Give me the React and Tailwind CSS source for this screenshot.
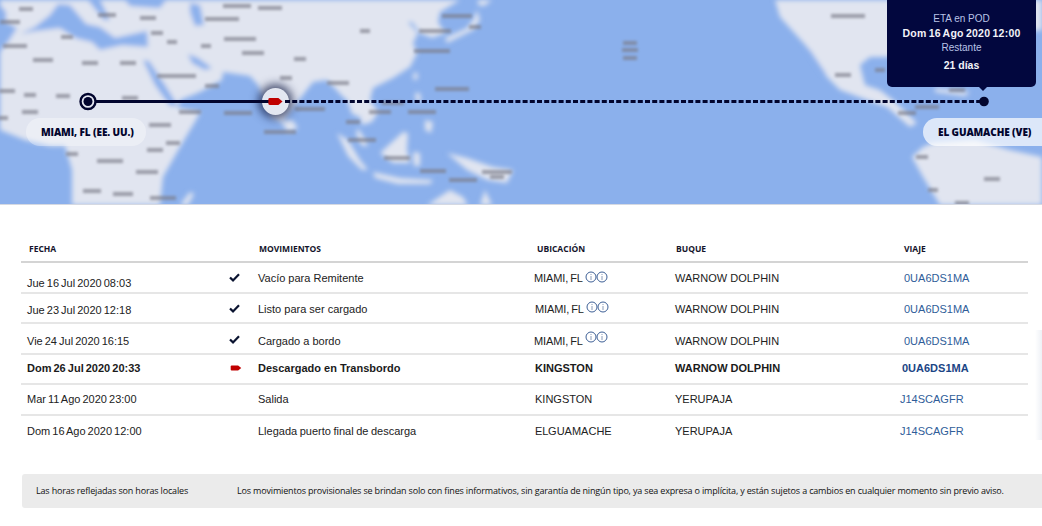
import React from "react";

const land = [
  // Africa + Eurasia
  "M0 0 L460 0 L440 12 L438 22 L445 33 L432 38 L420 33 L412 22 L408 22 L418 33 L413 43 L417 53 L410 67 L393 78 L373 88 L370 100 L378 112 L372 122 L362 125 L360 117 L352 114 L347 100 L343 97 L327 80 L313 82 L295 105 L282 122 L272 118 L258 85 L250 76 L223 72 L222 80 L200 92 L180 100 L178 108 L200 112 L196 120 L180 147 L163 177 L160 205 L72 205 L72 170 L65 146 L50 146 L25 140 L0 130 Z",
  // Madagascar
  "M190 192 L194 194 L188 205 L180 205 Z",
  // Sri Lanka
  "M281 122 L292 120 L298 128 L288 132 Z",
  // Malay / Sumatra
  "M337 133 L348 140 L360 160 L368 170 L362 170 L348 156 Z",
  "M358 128 L364 138 L368 146 L362 146 L356 134 Z",
  // Java
  "M373 172 L400 178 L433 180 L430 184 L398 184 L375 178 Z",
  // Borneo
  "M380 153 L403 132 L408 133 L407 150 L410 163 L393 163 Z",
  // Sulawesi
  "M413 152 L420 153 L420 166 L414 166 Z",
  // Taiwan, Philippines
  "M414 72 L418 74 L417 80 L413 79 Z",
  "M415 93 L420 93 L421 102 L416 101 Z",
  "M425 120 L433 122 L431 133 L425 130 Z",
  // Japan
  "M477 10 L480 20 L473 30 L447 43 L445 38 L467 28 L473 20 Z",
  "M478 0 L492 0 L484 6 L478 5 Z",
  // New Guinea
  "M447 153 L467 158 L493 167 L513 170 L507 183 L487 180 L467 170 Z",
  // Australia
  "M427 205 L450 190 L463 197 L468 205 Z",
  "M480 205 L485 190 L492 205 Z",
  // North + Central America
  "M775 0 L780 17 L807 47 L827 77 L840 90 L867 100 L887 107 L910 127 L917 123 L893 100 L880 90 L865 85 L860 65 L870 57 L890 57 L900 45 L1042 30 L1042 0 Z",
  // Cuba
  "M935 88 L970 92 L965 96 L935 92 Z",
  // South America
  "M923 147 L933 143 L975 140 L1010 150 L1042 157 L1042 205 L940 205 L923 177 L912 157 Z",
];

const seas = [
  // Atlantic
  "M0 5 L6 12 L6 22 L17 28 L8 42 L0 52 Z",
  // Mediterranean
  "M20 34 L35 27 L50 15 L58 4 L70 5 L86 24 L100 27 L115 38 L147 31 L148 47 L122 45 L100 50 L92 42 L75 38 L60 28 L35 31 Z",
  // Adriatic + Aegean
  "M88 0 L100 0 L110 20 L104 20 Z",
  // Black sea
  "M125 0 L166 0 L160 8 L130 6 Z",
  // Caspian
  "M190 3 L200 5 L204 25 L195 26 L190 12 Z",
  // Red Sea
  "M143 60 L149 61 L165 85 L178 106 L170 106 L155 85 Z",
  // Persian Gulf
  "M188 54 L198 58 L212 68 L205 70 L192 63 Z",
  // Baja gulf
  "M806 48 L810 50 L826 74 L823 74 Z",
];

const smudges = [
  [26,9,14],[10,22,20],[15,46,24],[43,60,20],[90,63,16],[128,63,16],[67,37,12],[107,15,18],[148,18,16],[157,33,12],[172,42,10],[168,76,22],[7,91,16],[30,95,12],[63,96,14],[130,98,16],[30,112,16],[3,118,10],[160,125,22],[173,143,14],[155,150,16],[72,154,12],[110,161,26],[147,172,22],[92,191,18],[123,194,20],[163,198,26],
  [237,6,28],[270,8,24],[222,19,34],[240,39,32],[206,46,10],[253,53,22],[300,59,12],[187,76,18],[212,86,14],[286,78,12],[338,83,22],[190,112,22],[238,113,28],[310,109,30],[280,132,32],[353,122,14],[355,140,14],
  [365,31,10],[457,16,30],[475,27,12],[435,31,32],[432,51,36],[452,89,34],[393,103,22],[380,112,22],[422,112,28],[368,140,16],[397,158,26],[433,171,26],[463,180,28],[497,172,30],[497,177,14],
  [630,43,14],[630,50,16],[630,58,14],
  [848,16,34],[843,75,16],[880,70,10],[927,107,24],[907,113,18],[922,157,12],[992,179,16],[933,190,10],[962,203,14],[957,90,16],
];

function Cell({ children, className = "" }) {
  return <div className={"flex items-center " + className}>{children}</div>;
}

function Info({ className = "" }) {
  return (
    <svg width="23" height="12" viewBox="0 0 23 12" className={"shrink-0 " + className}>
      <g fill="none" stroke="#3d5f96" strokeWidth="1">
        <circle cx="6" cy="6" r="5" />
        <circle cx="17" cy="6" r="5" />
      </g>
      <g stroke="#8a9bb8" strokeWidth="1">
        <path d="M6 5 V9" />
        <path d="M6 3 V4" />
        <path d="M17 5 V9" />
        <path d="M17 3 V4" />
      </g>
    </svg>
  );
}

function Check() {
  return (
    <svg width="11" height="9" viewBox="0 0 11 9">
      <path d="M1 4.5 L4 7.4 L10 1.2" fill="none" stroke="#0a1330" strokeWidth="2.2" />
    </svg>
  );
}

function Ship({ w = 13, h = 7 }) {
  return (
    <svg width={w} height={h} viewBox="0 0 13 7">
      <path d="M1.5 0.5 H9 L12.6 3.5 L9 6.5 H1.5 Q0.3 6.5 0.3 5.3 V1.7 Q0.3 0.5 1.5 0.5 Z" fill="#c00000" />
    </svg>
  );
}

const rows = [
  { date: "Jue 16 Jul 2020 08:03", icon: "check", mov: "Vacío para Remitente", loc: "MIAMI, FL", infoY: "-translate-y-[1px]", ship: "WARNOW DOLPHIN", voy: "0UA6DS1MA", h: "h-[31px]", dy: "pt-[11px]", my: "", ix: "pb-[1px]", lx: "", vx: "pl-[4px]" },
  { date: "Jue 23 Jul 2020 12:18", icon: "check", mov: "Listo para ser cargado", loc: "MIAMI, FL", infoY: "-translate-y-[2px]", ship: "WARNOW DOLPHIN", voy: "0UA6DS1MA", h: "h-[30px]", dy: "pt-[3px]", my: "pt-[2px]", ix: "pt-[1px]", lx: "pl-[1px]", vx: "pl-[4px]" },
  { date: "Vie 24 Jul 2020 16:15", icon: "check", mov: "Cargado a bordo", loc: "MIAMI, FL", infoY: "-translate-y-[4px]", ship: "WARNOW DOLPHIN", voy: "0UA6DS1MA", h: "h-[31px]", dy: "pt-[4px]", my: "pt-[4px]", ix: "pt-[2px]", lx: "", vx: "pl-[4px]" },
  { date: "Dom 26 Jul 2020 20:33", icon: "ship", mov: "Descargado en Transbordo", loc: "KINGSTON", ship: "WARNOW DOLPHIN", voy: "0UA6DS1MA", h: "h-[30px]", dy: "pb-[2px]", my: "pb-[2px]", ix: "pb-[2px]", lx: "pl-[1px]", vx: "pl-[2px]", bold: true },
  { date: "Mar 11 Ago 2020 23:00", mov: "Salida", loc: "KINGSTON", ship: "YERUPAJA", voy: "J14SCAGFR", h: "h-[31px]", dy: "pb-[1px]", my: "pb-[1px]", ix: "", lx: "pl-[1px]", vx: "" },
  { date: "Dom 16 Ago 2020 12:00", mov: "Llegada puerto final de descarga", loc: "EL GUAMACHE", ship: "YERUPAJA", voy: "J14SCAGFR", h: "h-[31px]", dy: "pb-[1px]", my: "pb-[1px]", ix: "", lx: "pl-[1px]", vx: "", last: true },
];

const cols = "grid grid-cols-[206px_31px_276px_140px_226px_1fr]";

export default function App() {
  return (
    <div className="relative w-[1042px] h-[526px] overflow-hidden bg-white font-['Liberation_Sans',Arial,sans-serif]">
      {/* Map */}
      <div className="relative h-[205px] bg-[#8bb0ec] overflow-hidden border-b border-[#d5d9e2]">
        <svg width="1042" height="205" viewBox="0 0 1042 205" className="absolute inset-0">
          <defs>
            <filter id="b1" filterUnits="userSpaceOnUse" x="-20" y="-20" width="1082" height="245"><feGaussianBlur stdDeviation="2.4" /></filter>
            <filter id="b2" filterUnits="userSpaceOnUse" x="-20" y="-20" width="1082" height="245"><feGaussianBlur stdDeviation="1.5" /></filter>
          </defs>
          <g filter="url(#b1)">
            <g fill="#e1e5f0">
              {land.map((d, i) => <path key={i} d={d} />)}
            </g>
            <g fill="#8bb0ec">
              {seas.map((d, i) => <path key={i} d={d} />)}
            </g>
          </g>
          <g filter="url(#b2)" fill="#7b7d88" opacity="0.7">
            {smudges.map(([x, y, w], i) => <rect key={i} x={x - w / 2} y={y - 2} width={w} height="4" />)}
          </g>
        </svg>

        {/* glow behind vessel */}
        <div className="absolute left-[262px] top-[88px] w-[27px] h-[27px] rounded-full bg-[#e3e7f1] shadow-[0_0_9px_4px_rgba(20,30,70,0.7)]" />
        <svg width="1042" height="205" viewBox="0 0 1042 205" className="absolute inset-0">
          <path d="M96 101.5 H269" stroke="#02052e" strokeWidth="3" />
          <path d="M285 101.5 H980" stroke="#02052e" strokeWidth="3" strokeDasharray="5 2.2" />
          <circle cx="88" cy="101.5" r="7.5" fill="#e6e9f3" stroke="#02052e" strokeWidth="2.4" />
          <circle cx="88" cy="101.5" r="4.5" fill="#02052e" />
          <circle cx="984" cy="101.5" r="4.8" fill="#02052e" />
        </svg>
        <div className="absolute left-[268px] top-[97px] flex"><Ship w={15} h={9} /></div>

        <div className="absolute left-[26px] top-[118px] w-[120px] h-[28px] rounded-[14px] bg-white/35 flex items-center pl-[15px] font-['Open_Sans',sans-serif] text-[10px] font-extrabold text-[#02052e] whitespace-nowrap tracking-[-0.1px]">MIAMI, FL (EE. UU.)</div>
        <div className="absolute left-[923px] top-[118px] w-[119px] h-[28px] rounded-l-[14px] bg-white/70 flex items-center pl-[15px] font-['Open_Sans',sans-serif] text-[10px] font-extrabold text-[#02052e] whitespace-nowrap tracking-[-0.1px]">EL GUAMACHE (VE)</div>

        {/* ETA tooltip */}
        <div className="absolute left-[887px] top-0 w-[149px] h-[87px] rounded-b-[5px] bg-[#02073e] flex flex-col items-center pt-[12px] text-center">
          <div className="text-[10px] leading-[14px] text-[#b9c3e6]">ETA en POD</div>
          <div className="text-[10.5px] leading-[15px] text-[#f2f3f8] font-bold tracking-[0.25px] [word-spacing:-1px] whitespace-nowrap">Dom 16 Ago 2020 12:00</div>
          <div className="text-[10px] leading-[14px] text-[#b9c3e6]">Restante</div>
          <div className="text-[10.5px] leading-[20px] text-[#f2f3f8] font-bold">21 días</div>
          <div className="absolute left-[92px] top-[87px] w-0 h-0 border-x-[4px] border-x-transparent border-t-[4px] border-t-[#02073e]" />
        </div>
      </div>

      {/* Table */}
      <div className="ml-[21px] mr-[14px] mt-[37px]">
        <div className={cols + " h-[21px] border-b-2 border-[#d4d4d4] items-start pt-[1px] font-['Open_Sans',sans-serif] text-[8.5px] leading-[12px] font-bold text-[#14142b]"}>
          <div className="pl-[8px]">FECHA</div>
          <div />
          <div className="pl-[1px]">MOVIMIENTOS</div>
          <div className="pl-[3px]">UBICACIÓN</div>
          <div className="pl-[2px]">BUQUE</div>
          <div className="pl-[4px]">VIAJE</div>
        </div>
        {rows.map((r) => (
          <div
            key={r.date}
            className={`${cols} ${r.h} ${r.last ? "" : "border-b-2 border-[#e6e6e6]"} text-[11px] leading-[14px] ${r.bold ? "font-bold text-[#1b1b1b]" : "text-[#222]"}`}
          >
            <Cell className={`pl-[6px] [word-spacing:-1px] ${r.dy}`}>{r.date}</Cell>
            <Cell className={`justify-center ${r.icon === "ship" ? "pr-[13px]" : "pr-[16px]"} ${r.ix}`}>
              {r.icon === "check" && <Check />}
              {r.icon === "ship" && <Ship w={12} h={6} />}
            </Cell>
            <Cell className={`${r.my} ${r.last ? "[word-spacing:-0.5px]" : ""}`}>{r.mov}</Cell>
            <Cell className={`gap-[2px] ${r.lx} ${r.my} whitespace-nowrap ${r.loc === "EL GUAMACHE" ? "[word-spacing:-3px]" : r.infoY ? "tracking-[-0.1px] [word-spacing:-1px]" : ""}`}>
              <span>{r.loc}</span>
              {r.infoY && <Info className={r.infoY} />}
            </Cell>
            <Cell className={`pl-[1px] ${r.my}`}>{r.ship}</Cell>
            <Cell className={`${r.vx} ${r.my} ${r.bold ? "text-[#1b4585]" : "text-[#2f5d99]"}`}>{r.voy}</Cell>
          </div>
        ))}
      </div>

      {/* Faint scroll edge */}
      <div className="absolute right-0 top-[330px] w-[7px] h-[110px] bg-linear-to-l from-[#eef1f6] to-transparent" />

      {/* Footer note */}
      <div className="absolute left-[22px] right-0 top-[474px] h-[34px] rounded-l-[3px] bg-[#ebebeb] flex items-center pl-[14px] font-['Open_Sans',sans-serif] text-[9px] text-[#111] tracking-[-0.17px] whitespace-nowrap">
        <span className="w-[201px]">Las horas reflejadas son horas locales</span>
        <span>Los movimientos provisionales se brindan solo con fines informativos, sin garantía de ningún tipo, ya sea expresa o implícita, y están sujetos a cambios en cualquier momento sin previo aviso.</span>
      </div>
    </div>
  );
}
